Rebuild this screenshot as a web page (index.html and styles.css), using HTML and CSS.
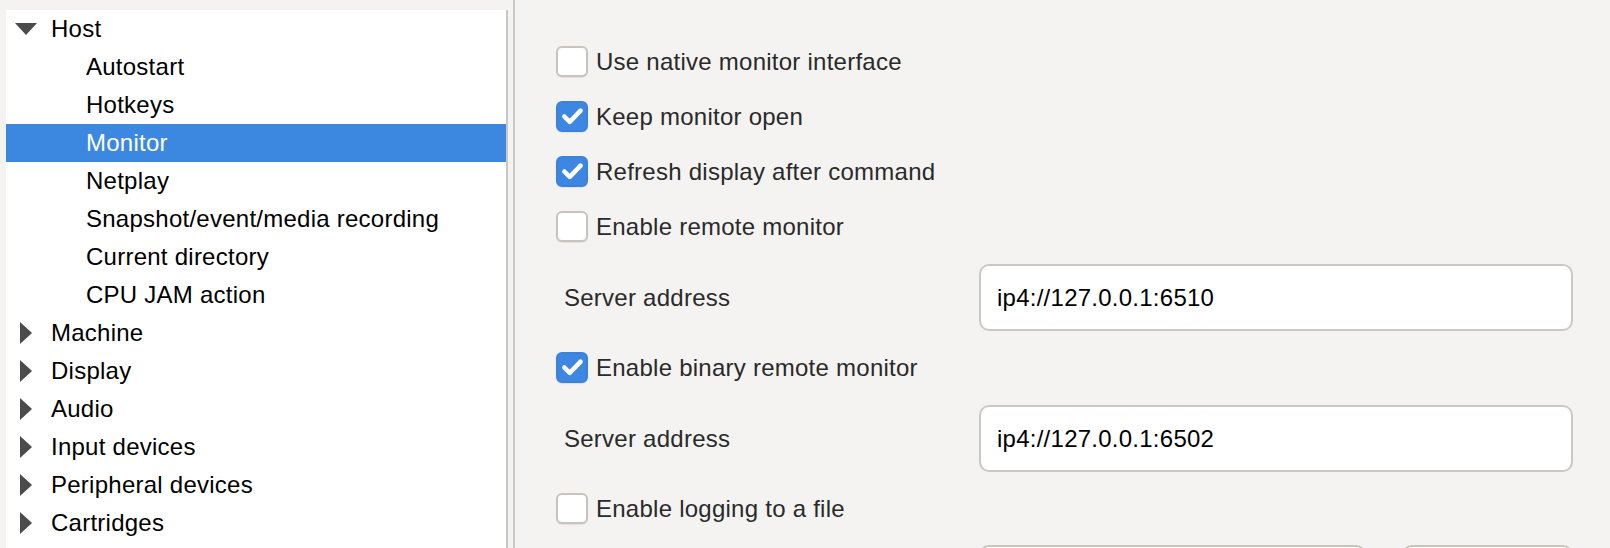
FILE: index.html
```html
<!DOCTYPE html>
<html>
<head>
    <title>Settings - Monitor</title>
    <meta charset="utf-8">
    <link rel="stylesheet" href="styles.css">
</head>
<body>

    <div class="window">
        <div class="tree">
            <div class="node">
                <span class="arrow"><svg width="22" height="12" viewBox="0 0 22 12"><path d="M0 0 L22 0 L11 12 Z" fill="#4b4b4b"/></svg></span>
                Host
            </div>
            <div class="node child">Autostart</div>
            <div class="node child">Hotkeys</div>
            <div class="node child selected">Monitor</div>
            <div class="node child">Netplay</div>
            <div class="node child">Snapshot/event/media recording</div>
            <div class="node child">Current directory</div>
            <div class="node child">CPU JAM action</div>
            <div class="node closed">
                <span class="arrow"><svg width="12" height="22" viewBox="0 0 12 22"><path d="M0 0 L12 11 L0 22 Z" fill="#4b4b4b"/></svg></span>
                Machine
            </div>
            <div class="node closed">
                <span class="arrow"><svg width="12" height="22" viewBox="0 0 12 22"><path d="M0 0 L12 11 L0 22 Z" fill="#4b4b4b"/></svg></span>
                Display
            </div>
            <div class="node closed">
                <span class="arrow"><svg width="12" height="22" viewBox="0 0 12 22"><path d="M0 0 L12 11 L0 22 Z" fill="#4b4b4b"/></svg></span>
                Audio
            </div>
            <div class="node closed">
                <span class="arrow"><svg width="12" height="22" viewBox="0 0 12 22"><path d="M0 0 L12 11 L0 22 Z" fill="#4b4b4b"/></svg></span>
                Input devices
            </div>
            <div class="node closed">
                <span class="arrow"><svg width="12" height="22" viewBox="0 0 12 22"><path d="M0 0 L12 11 L0 22 Z" fill="#4b4b4b"/></svg></span>
                Peripheral devices
            </div>
            <div class="node closed">
                <span class="arrow"><svg width="12" height="22" viewBox="0 0 12 22"><path d="M0 0 L12 11 L0 22 Z" fill="#4b4b4b"/></svg></span>
                Cartridges
            </div>
        </div>

        <div class="splitter"></div>

        <div class="pane">
            <div class="check">
                <span class="box"></span>
                Use native monitor interface
            </div>
            <div class="check">
                <span class="box on"><svg width="31" height="31" viewBox="0 0 31 31"><path d="M7 15.5 L13 21.5 L25 9" fill="none" stroke="#fff" stroke-width="5" stroke-linecap="round" stroke-linejoin="round"/></svg></span>
                Keep monitor open
            </div>
            <div class="check">
                <span class="box on"><svg width="31" height="31" viewBox="0 0 31 31"><path d="M7 15.5 L13 21.5 L25 9" fill="none" stroke="#fff" stroke-width="5" stroke-linecap="round" stroke-linejoin="round"/></svg></span>
                Refresh display after command
            </div>
            <div class="check">
                <span class="box"></span>
                Enable remote monitor
            </div>
            <div class="field">
                <span class="label">Server address</span>
                <input class="text" type="text" value="ip4://127.0.0.1:6510">
            </div>
            <div class="check">
                <span class="box on"><svg width="31" height="31" viewBox="0 0 31 31"><path d="M7 15.5 L13 21.5 L25 9" fill="none" stroke="#fff" stroke-width="5" stroke-linecap="round" stroke-linejoin="round"/></svg></span>
                Enable binary remote monitor
            </div>
            <div class="field">
                <span class="label">Server address</span>
                <input class="text" type="text" value="ip4://127.0.0.1:6502">
            </div>
            <div class="check">
                <span class="box"></span>
                Enable logging to a file
            </div>
            <div class="file-row">
                <span class="combo"></span>
                <span class="browse"></span>
            </div>
        </div>
    </div>

</body>
</html>
```

FILE: styles.css
```css
* {
    box-sizing: border-box;
}

body {
    margin: 0;
    padding: 0;
    background-color: #f4f3f1;
    font-family: "Liberation Sans", Arial, sans-serif;
    font-size: 24px;
    letter-spacing: 0.25px;
    width: 1610px;
    height: 548px;
    overflow: hidden;
}

.window {
    display: flex;
    height: 548px;
    overflow: hidden;
}

/* left tree */

.tree {
    width: 502px;
    margin: 10px 0 0 6px;
    background-color: #fff;
    border-right: 2px solid #cdc7c1;
    color: #000;
}

.node {
    display: flex;
    align-items: center;
    height: 38px;
    padding-left: 45px;
    position: relative;
}

.node .arrow {
    position: absolute;
    left: 9px;
    top: 13px;
    display: flex;
}

.node.closed .arrow {
    left: 14px;
    top: 8px;
}

.node.child {
    padding-left: 80px;
}

.node.selected {
    background-color: #3c87e0;
    color: #fff;
}

.splitter {
    width: 2px;
    margin-left: 5px;
    background-color: #cdc7c1;
}

/* right pane */

.pane {
    flex: 1;
    height: 548px;
    overflow: hidden;
    padding: 46px 37px 0 41px;
    display: flex;
    flex-direction: column;
    gap: 21px;
    color: #2a2a2a;
}

.check {
    display: flex;
    align-items: center;
    height: 31px;
    flex-shrink: 0;
    gap: 8px;
}

.check + .check {
    margin-top: 3px;
}

.box {
    width: 32px;
    height: 31px;
    flex-shrink: 0;
    background-color: #fff;
    border: 2px solid #cac3bc;
    border-radius: 6px;
    box-shadow: 0 1px 1px rgba(0,0,0,0.08);
}

.box.on {
    background-color: #3d87e2;
    border-color: #3a82dc;
    display: flex;
    align-items: center;
    justify-content: center;
}

.field {
    display: flex;
    align-items: center;
    height: 67px;
    flex-shrink: 0;
}

.check + .field {
    margin-top: 1px;
}

.label {
    width: 423px;
    padding-left: 8px;
}

.text {
    width: 594px;
    height: 67px;
    border: 2px solid #cdc7c1;
    border-radius: 10px;
    background-color: #fff;
    font-family: "Liberation Sans", Arial, sans-serif;
    font-size: 24px;
    letter-spacing: 0.25px;
    color: #000;
    padding: 0 16px;
    outline: none;
}

.file-row {
    display: flex;
    flex-shrink: 0;
    gap: 36px;
    padding-left: 423px;
}

.combo,
.browse {
    height: 60px;
    border: 2px solid #cbc4bd;
    border-radius: 10px;
    background-color: #fff;
}

.combo {
    width: 387px;
}

.browse {
    width: 171px;
}
```
